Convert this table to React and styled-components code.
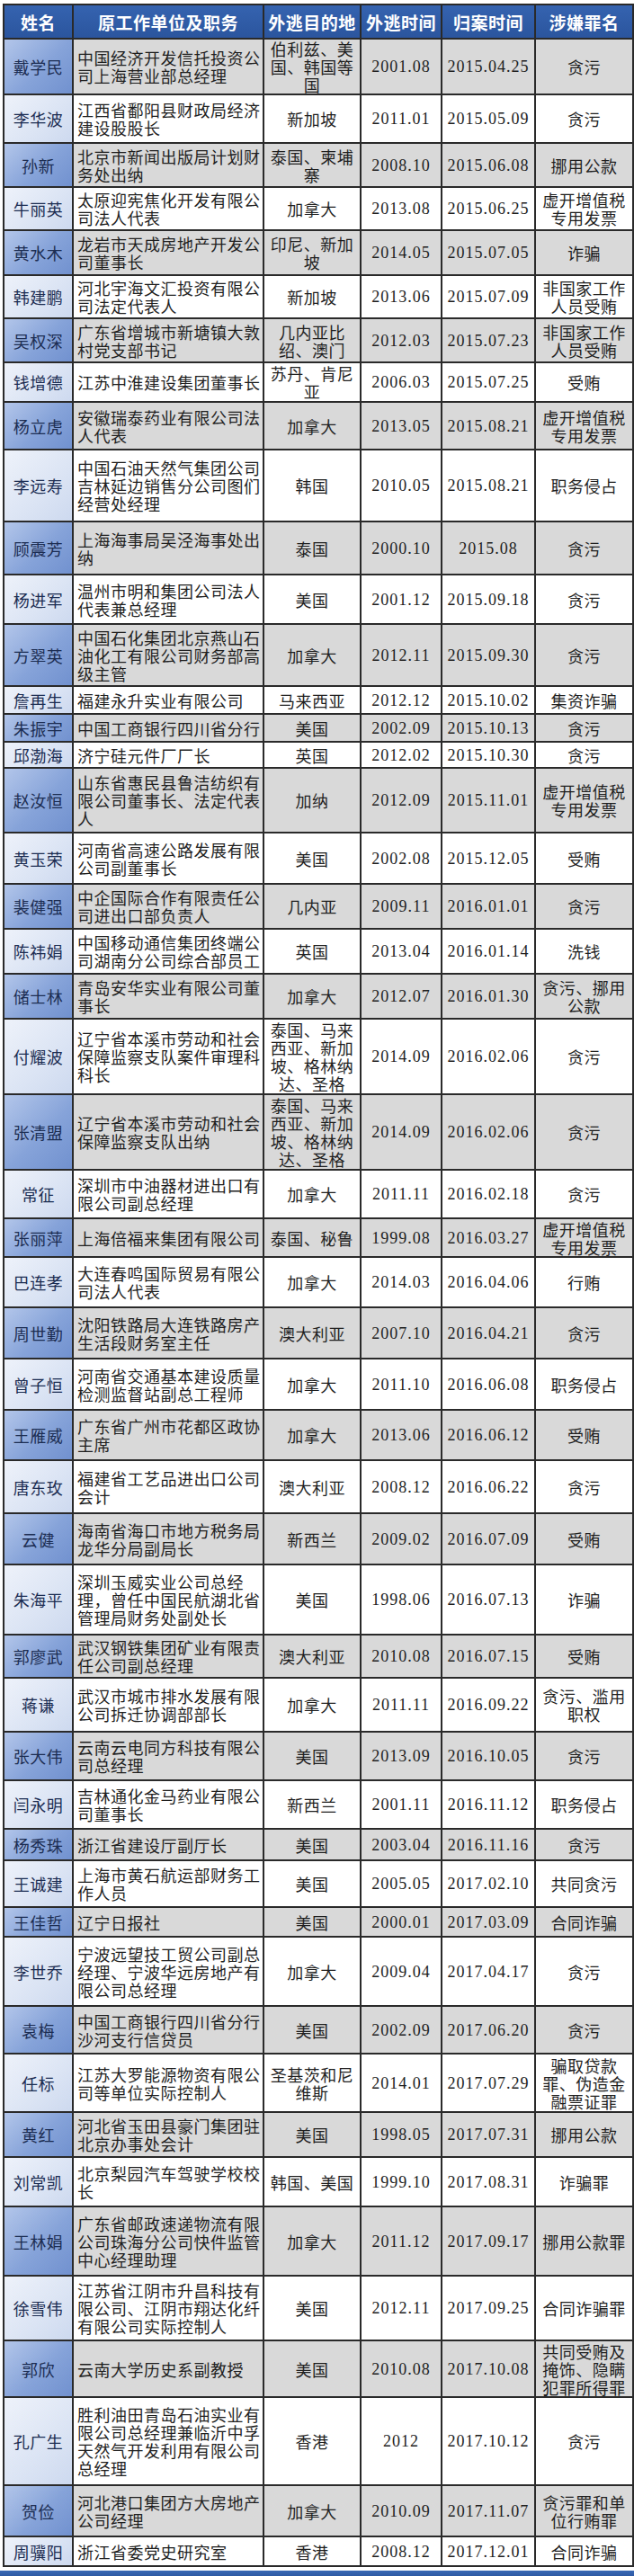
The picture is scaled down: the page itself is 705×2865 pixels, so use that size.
import React from "react";
import styled, { createGlobalStyle } from "styled-components";

const GlobalStyle = createGlobalStyle`
  html, body { margin: 0; padding: 0; background: #fff; }
  body { font-family: "Noto Sans CJK SC", "Noto Sans", sans-serif; }
`;

const Page = styled.div`
  padding: 4px 2px 0 3px;
  width: 700px;
`;

const Table = styled.table`
  width: 700px;
  table-layout: fixed;
  border-collapse: collapse;
  border: 2px solid #2a2a2a;
`;

const HeadCell = styled.th`
  height: 36px;
  padding: 0;
  background: linear-gradient(180deg, #3563b0 0%, #2b559e 100%);
  color: #fff;
  font-family: "Noto Sans CJK SC", sans-serif;
  font-size: 19px;
  font-weight: 700;
  letter-spacing: 0.5px;
  text-align: center;
  border: 2px solid #2a2a2a;
  white-space: nowrap;
`;

const Row = styled.tr`
  height: ${(p) => p.$h}px;
  background: ${(p) => (p.$odd ? "#d9d9d9" : "#ffffff")};
`;

const Cell = styled.td`
  padding: 0 2px;
  border: 2px solid #2a2a2a;
  text-align: center;
  vertical-align: middle;
  font-family: "Noto Sans CJK SC", sans-serif;
  font-size: 18px;
  line-height: 20px;
  letter-spacing: 0.5px;
  color: #1f1f1f;
`;

const NameCell = styled(Cell)`
  background: ${(p) =>
    p.$odd
      ? "linear-gradient(135deg, #b3c6ea 0%, #86a3d9 55%, #7191cf 100%)"
      : "linear-gradient(135deg, #eef2fa 0%, #dbe4f4 60%, #cdd9ef 100%)"};
  color: #1c2d52;
  font-size: 18px;
  letter-spacing: 0.5px;
`;

const UnitCell = styled(Cell)`
  text-align: left;
  padding: 0 2px 0 4px;
`;

const DateCell = styled(Cell)`
  font-family: "Liberation Serif", serif;
  font-size: 18px;
  letter-spacing: 1px;
  color: #1e1e1e;
`;

const Footer = styled.div`
  height: 8px;
  margin: 4px -2px 0 -3px;
  background: linear-gradient(180deg, #3a68b5 0%, #2b559e 100%);
`;

const widths = [77, 212, 108, 90, 104, 109];
const heads = ["姓名", "原工作单位及职务", "外逃目的地", "外逃时间", "归案时间", "涉嫌罪名"];

const rows = [
  ["戴学民", "中国经济开发信托投资公司上海营业部总经理", "伯利兹、美国、韩国等国", "2001.08", "2015.04.25", "贪污", 62],
  ["李华波", "江西省鄱阳县财政局经济建设股股长", "新加坡", "2011.01", "2015.05.09", "贪污", 54],
  ["孙新", "北京市新闻出版局计划财务处出纳", "泰国、柬埔寨", "2008.10", "2015.06.08", "挪用公款", 49],
  ["牛丽英", "太原迎宪焦化开发有限公司法人代表", "加拿大", "2013.08", "2015.06.25", "虚开增值税专用发票", 48],
  ["黄水木", "龙岩市天成房地产开发公司董事长", "印尼、新加坡", "2014.05", "2015.07.05", "诈骗", 50],
  ["韩建鹏", "河北宇海文汇投资有限公司法定代表人", "新加坡", "2013.06", "2015.07.09", "非国家工作人员受贿", 48],
  ["吴权深", "广东省增城市新塘镇大敦村党支部书记", "几内亚比绍、澳门", "2012.03", "2015.07.23", "非国家工作人员受贿", 49],
  ["钱增德", "江苏中淮建设集团董事长", "苏丹、肯尼亚", "2006.03", "2015.07.25", "受贿", 44],
  ["杨立虎", "安徽瑞泰药业有限公司法人代表", "加拿大", "2013.05", "2015.08.21", "虚开增值税专用发票", 53],
  ["李远寿", "中国石油天然气集团公司吉林延边销售分公司图们经营处经理", "韩国", "2010.05", "2015.08.21", "职务侵占", 80],
  ["顾震芳", "上海海事局吴泾海事处出纳", "泰国", "2000.10", "2015.08", "贪污", 59],
  ["杨进军", "温州市明和集团公司法人代表兼总经理", "美国", "2001.12", "2015.09.18", "贪污", 55],
  ["方翠英", "中国石化集团北京燕山石油化工有限公司财务部高级主管", "加拿大", "2012.11", "2015.09.30", "贪污", 69],
  ["詹再生", "福建永升实业有限公司", "马来西亚", "2012.12", "2015.10.02", "集资诈骗", 31],
  ["朱振宇", "中国工商银行四川省分行", "美国", "2002.09", "2015.10.13", "贪污", 31],
  ["邱渤海", "济宁硅元件厂厂长", "英国", "2012.02", "2015.10.30", "贪污", 29],
  ["赵汝恒", "山东省惠民县鲁洁纺织有限公司董事长、法定代表人", "加纳", "2012.09", "2015.11.01", "虚开增值税专用发票", 72],
  ["黄玉荣", "河南省高速公路发展有限公司副董事长", "美国", "2002.08", "2015.12.05", "受贿", 57],
  ["裴健强", "中企国际合作有限责任公司进出口部负责人", "几内亚", "2009.11", "2016.01.01", "贪污", 50],
  ["陈祎娟", "中国移动通信集团终端公司湖南分公司综合部员工", "英国", "2013.04", "2016.01.14", "洗钱", 50],
  ["储士林", "青岛安华实业有限公司董事长", "加拿大", "2012.07", "2016.01.30", "贪污、挪用公款", 50],
  ["付耀波", "辽宁省本溪市劳动和社会保障监察支队案件审理科科长", "泰国、马来西亚、新加坡、格林纳达、圣格", "2014.09", "2016.02.06", "贪污", 84],
  ["张清盟", "辽宁省本溪市劳动和社会保障监察支队出纳", "泰国、马来西亚、新加坡、格林纳达、圣格", "2014.09", "2016.02.06", "贪污", 84],
  ["常征", "深圳市中油器材进出口有限公司副总经理", "加拿大", "2011.11", "2016.02.18", "贪污", 54],
  ["张丽萍", "上海倍福来集团有限公司", "泰国、秘鲁", "1999.08", "2016.03.27", "虚开增值税专用发票", 43],
  ["巴连孝", "大连春鸣国际贸易有限公司法人代表", "加拿大", "2014.03", "2016.04.06", "行贿", 56],
  ["周世勤", "沈阳铁路局大连铁路房产生活段财务室主任", "澳大利亚", "2007.10", "2016.04.21", "贪污", 57],
  ["曾子恒", "河南省交通基本建设质量检测监督站副总工程师", "加拿大", "2011.10", "2016.06.08", "职务侵占", 57],
  ["王雁威", "广东省广州市花都区政协主席", "加拿大", "2013.06", "2016.06.12", "受贿", 56],
  ["唐东玫", "福建省工艺品进出口公司会计", "澳大利亚", "2008.12", "2016.06.22", "贪污", 59],
  ["云健", "海南省海口市地方税务局龙华分局副局长", "新西兰", "2009.02", "2016.07.09", "受贿", 57],
  ["朱海平", "深圳玉威实业公司总经理，曾任中国民航湖北省管理局财务处副处长", "美国", "1998.06", "2016.07.13", "诈骗", 78],
  ["郭廖武", "武汉钢铁集团矿业有限责任公司副总经理", "澳大利亚", "2010.08", "2016.07.15", "受贿", 48],
  ["蒋谦", "武汉市城市排水发展有限公司拆迁协调部部长", "加拿大", "2011.11", "2016.09.22", "贪污、滥用职权", 60],
  ["张大伟", "云南云电同方科技有限公司总经理", "美国", "2013.09", "2016.10.05", "贪污", 54],
  ["闫永明", "吉林通化金马药业有限公司董事长", "新西兰", "2001.11", "2016.11.12", "职务侵占", 54],
  ["杨秀珠", "浙江省建设厅副厅长", "美国", "2003.04", "2016.11.16", "贪污", 35],
  ["王诚建", "上海市黄石航运部财务工作人员", "美国", "2005.05", "2017.02.10", "共同贪污", 52],
  ["王佳哲", "辽宁日报社", "美国", "2000.01", "2017.03.09", "合同诈骗", 33],
  ["李世乔", "宁波远望技工贸公司副总经理、宁波华远房地产有限公司总经理", "加拿大", "2009.04", "2017.04.17", "贪污", 77],
  ["袁梅", "中国工商银行四川省分行沙河支行信贷员", "美国", "2002.09", "2017.06.20", "贪污", 53],
  ["任标", "江苏大罗能源物资有限公司等单位实际控制人", "圣基茨和尼维斯", "2014.01", "2017.07.29", "骗取贷款罪、伪造金融票证罪", 65],
  ["黄红", "河北省玉田县豪门集团驻北京办事处会计", "美国", "1998.05", "2017.07.31", "挪用公款", 50],
  ["刘常凯", "北京梨园汽车驾驶学校校长", "韩国、美国", "1999.10", "2017.08.31", "诈骗罪", 55],
  ["王林娟", "广东省邮政速递物流有限公司珠海分公司快件监管中心经理助理", "加拿大", "2011.12", "2017.09.17", "挪用公款罪", 77],
  ["徐雪伟", "江苏省江阴市升昌科技有限公司、江阴市翔达化纤有限公司实际控制人", "美国", "2012.11", "2017.09.25", "合同诈骗罪", 72],
  ["郭欣", "云南大学历史系副教授", "美国", "2010.08", "2017.10.08", "共同受贿及掩饰、隐瞒犯罪所得罪", 63],
  ["孔广生", "胜利油田青岛石油实业有限公司总经理兼临沂中孚天然气开发利用有限公司总经理", "香港", "2012", "2017.10.12", "贪污", 98],
  ["贺俭", "河北港口集团方大房地产公司经理", "加拿大", "2010.09", "2017.11.07", "贪污罪和单位行贿罪", 57],
  ["周骥阳", "浙江省委党史研究室", "香港", "2008.12", "2017.12.01", "合同诈骗", 33],
];

export default function App() {
  return (
    <Page>
      <GlobalStyle />
      <Table>
        <colgroup>
          {widths.map((w, i) => (
            <col key={i} style={{ width: w }} />
          ))}
        </colgroup>
        <thead>
          <tr>
            {heads.map((h) => (
              <HeadCell key={h}>{h}</HeadCell>
            ))}
          </tr>
        </thead>
        <tbody>
          {rows.map(([name, unit, dest, out, back, crime, h], i) => {
            const odd = i % 2 === 0;
            return (
              <Row key={name + i} $h={h} $odd={odd}>
                <NameCell $odd={odd}>{name}</NameCell>
                <UnitCell>{unit}</UnitCell>
                <Cell>{dest}</Cell>
                <DateCell>{out}</DateCell>
                <DateCell>{back}</DateCell>
                <Cell>{crime}</Cell>
              </Row>
            );
          })}
        </tbody>
      </Table>
      <Footer />
    </Page>
  );
}
